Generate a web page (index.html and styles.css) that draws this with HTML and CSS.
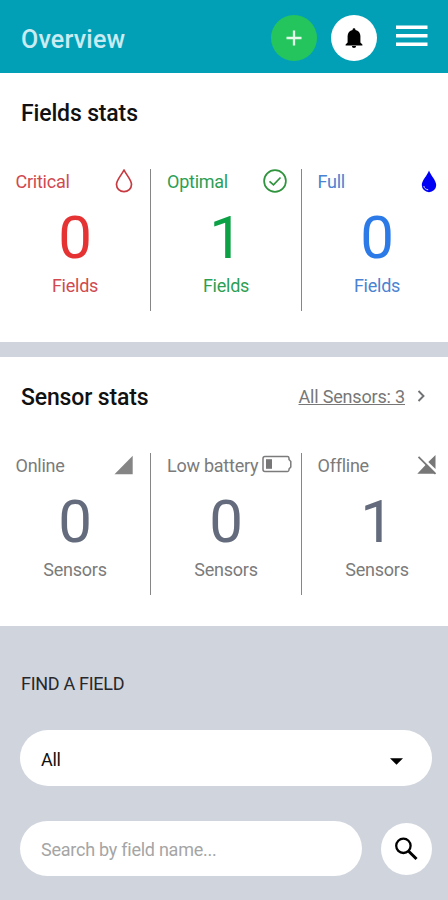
FILE: index.html
```html
<!DOCTYPE html>
<html lang="en">
<head>
<meta charset="utf-8">
<meta name="viewport" content="width=device-width, initial-scale=1">
<title>Overview</title>
<link rel="stylesheet" href="styles.css">
</head>
<body>
<header class="topbar">
  <h1 class="topbar-title">Overview</h1>
  <button class="round add" aria-label="Add">
    <svg width="46" height="46" viewBox="0 0 46 46"><path d="M23 15.500v15M15.500 23h15" stroke="#e4fbe9" stroke-width="2.300"/></svg>
  </button>
  <button class="round bell" aria-label="Notifications">
    <svg width="46" height="46" viewBox="0 0 46 46"><path d="M23 33a2.100 2.100 0 0 0 2.100-2.100h-4.200A2.100 2.100 0 0 0 23 33zM29.400 27.500v-6.500c0-3-2-5.400-5-6v-.4a1.400 1.400 0 0 0-2.800 0v.4C18.600 15.600 16.600 18 16.600 21v6.500L14.600 29.400v1h16.800v-1z"/></svg>
  </button>
  <button class="menu" aria-label="Menu">
    <svg width="32" height="22" viewBox="0 0 32 22"><path d="M0 2.300h31.500M0 10.700h31.500M0 19.200h31.500" stroke="#fff" stroke-width="3.500"/></svg>
  </button>
</header>
<main>
  <section class="panel">
    <div class="panel-head"><h2>Fields stats</h2></div>
    <div class="stats">
      <div class="stat critical">
        <div class="stat-top"><span>Critical</span>
          <svg width="18" height="26" viewBox="0 0 18 26"><path d="M9 1C7 5.500 1.500 10.700 1.500 15.600a7.500 7 0 0 0 15 0C16.500 10.700 11 5.500 9 1z" fill="none" stroke="#c63a40" stroke-width="1.700" stroke-linejoin="round"/></svg>
        </div>
        <div class="number">0</div><div class="unit">Fields</div>
      </div>
      <div class="stat optimal">
        <div class="stat-top"><span>Optimal</span>
          <svg width="24" height="26" viewBox="0 0 24 26"><circle cx="12" cy="12" r="10.900" fill="none" stroke="#2f943d" stroke-width="1.700"/><path d="M6.500 12.300l4 3.600 7-7.400" fill="none" stroke="#2f943d" stroke-width="1.700"/></svg>
        </div>
        <div class="number">1</div><div class="unit">Fields</div>
      </div>
      <div class="stat full">
        <div class="stat-top"><span>Full</span>
          <svg width="16" height="26" viewBox="0 0 16 26"><path d="M8 1.500C6.500 6 .8 11.500.8 16a7.200 7.200 0 0 0 14.400 0C15.200 11.500 9.500 6 8 1.500z" fill="#0000f5"/><path d="M2.800 17c.5 2.200 2 3.500 4.400 3.800" fill="none" stroke="#d8d8ff" stroke-width="1"/></svg>
        </div>
        <div class="number">0</div><div class="unit">Fields</div>
      </div>
    </div>
  </section>
  <section class="panel">
    <div class="panel-head"><h2>Sensor stats</h2>
      <a class="all" href="#"><span>All Sensors: 3</span><svg width="9" height="14" viewBox="0 0 9 14"><path d="M1.500 2l5 5-5 5" fill="none" stroke="#707274" stroke-width="1.900"/></svg></a>
    </div>
    <div class="stats sensors">
      <div class="stat">
        <div class="stat-top"><span>Online</span>
          <svg width="19" height="26" viewBox="0 0 19 26"><path d="M18.700 2.700v18.500H.5z" fill="#858585"/></svg>
        </div>
        <div class="number">0</div><div class="unit">Sensors</div>
      </div>
      <div class="stat">
        <div class="stat-top"><span>Low battery</span>
          <svg width="30" height="26" viewBox="0 0 30 26"><path d="M3 3.500h22.500q1.300 0 1.500 1.500v1.500l1.800 2v5.500l-1.800 2v1q-.2 1.500-1.500 1.500H3q-2 0-2-2v-11q0-2 2-2z" fill="none" stroke="#7b7b7b" stroke-width="1.500"/><path d="M4 6.200h6v9.600H4z" fill="#777"/></svg>
        </div>
        <div class="number">0</div><div class="unit">Sensors</div>
      </div>
      <div class="stat">
        <div class="stat-top"><span>Offline</span>
          <svg width="20" height="26" viewBox="0 0 20 26"><path d="M18.500 2v14L11.300 8.900zM9.500 11L18 19.500l.5 1.300H.3z" fill="#777"/><path d="M1.500 3.800L18.500 20.800" stroke="#777" stroke-width="1.700"/></svg>
        </div>
        <div class="number">1</div><div class="unit">Sensors</div>
      </div>
    </div>
  </section>
  <section class="finder">
    <h3>FIND A FIELD</h3>
    <div class="select"><span>All</span><svg width="13" height="7" viewBox="0 0 13 7"><path d="M0 .3h13L6.500 6.700z"/></svg></div>
    <div class="search">
      <div class="field"><span>Search by field name...</span></div>
      <button class="go" aria-label="Search"><svg width="50" height="52" viewBox="0 0 50 52"><circle cx="22.400" cy="22.800" r="7.200" fill="none" stroke="#000" stroke-width="2.300"/><path d="M27.700 28.200l7.800 7.800" stroke="#000" stroke-width="3"/></svg></button>
    </div>
  </section>
</main>
</body>
</html>
```

FILE: styles.css
```css
* { box-sizing: border-box; }
body {
  margin: 0;
  width: 448px;
  height: 900px;
  overflow: hidden;
  background: #d0d4dd;
  font-family: Roboto, "Liberation Sans", sans-serif;
  font-size: 18px;
  letter-spacing: -.25px;
  color: #111;
}
h1, h2, h3 { margin: 0; }
button { border: 0; padding: 0; background: none; }
svg { display: block; flex: none; }
.topbar {
  display: flex;
  align-items: flex-start;
  height: 73px;
  padding: 15px 20px 0 21px;
  background: #02a0b7;
}
.topbar-title {
  flex: 1;
  font-size: 25px;
  font-weight: 500;
  line-height: 50px;
  color: #c9ebf2;
  letter-spacing: .2px;
}
.round { width: 46px; height: 46px; border-radius: 50%; margin-right: 14px; }
.add { background: #24c55c; }
.bell { background: #fff; margin-right: 19px; }
.menu { padding-top: 10px; width: 32px; }
.panel { height: 269px; background: #fff; overflow: hidden; }
.panel + .panel { margin-top: 15px; }
.panel-head {
  display: flex;
  justify-content: space-between;
  align-items: center;
  height: 80px;
  padding: 0 22px 0 21px;
}
h2 { font-size: 23px; font-weight: 500; letter-spacing: -.15px; }
.all {
  display: flex;
  align-items: center;
  gap: 12px;
  margin-top: -2px;
  color: #777;
  text-decoration: none;
}
.all span { text-decoration: underline; text-decoration-thickness: 1px; letter-spacing: -.18px; }
.stats {
  display: grid;
  grid-template-columns: 151px 151px 151px;
  width: 453px;
  margin-top: 16px;
}
.stat { height: 142px; border-right: 1px solid #868686; text-align: center; }
.stat:last-child { border-right: 0; }
.stat-top {
  display: flex;
  justify-content: space-between;
  height: 26px;
  line-height: 26px;
  padding: 0 17px 0 15.5px;
}
.stat:nth-child(2) .stat-top { padding: 0 14px 0 16px; }
.stat:nth-child(3) .stat-top { padding: 0 16px 0 15.5px; }
.stat:nth-child(3) .number, .stat:nth-child(3) .unit { margin-right: 1px; }
.number { margin-top: 13px; font-size: 60px; line-height: 60px; letter-spacing: 0; }
.unit { margin-top: 6px; line-height: 24px; }
.critical { color: #d04a50; }
.critical .number { color: #e53333; }
.optimal { color: #2c9f55; }
.optimal .number { color: #0da146; }
.full { color: #4a83d2; }
.full .number { color: #2b7ae8; }
.sensors { color: #7b7b7b; }
.sensors .number { color: #636b7c; }
.sensors .stat:nth-child(2) .stat-top { padding-right: 9px; }
.finder { padding: 45px 16px 0 20px; }
h3 { padding-left: 1px; font-size: 18px; font-weight: 400; line-height: 26px; color: #27282c; letter-spacing: -.3px; }
.select {
  display: flex;
  align-items: center;
  justify-content: space-between;
  height: 56px;
  margin-top: 33px;
  padding: 2px 29px 0 21px;
  border-radius: 28px;
  background: #fff;
}
.select svg { margin-top: 4px; }
.search { display: flex; justify-content: space-between; align-items: center; margin-top: 35px; }
.field {
  width: 342px;
  height: 55px;
  padding-left: 21px;
  border-radius: 28px;
  background: #fff;
  color: #a5a5a5;
  line-height: 57px;
}
.go { width: 51px; height: 52px; border-radius: 50%; background: #fff; }
```
